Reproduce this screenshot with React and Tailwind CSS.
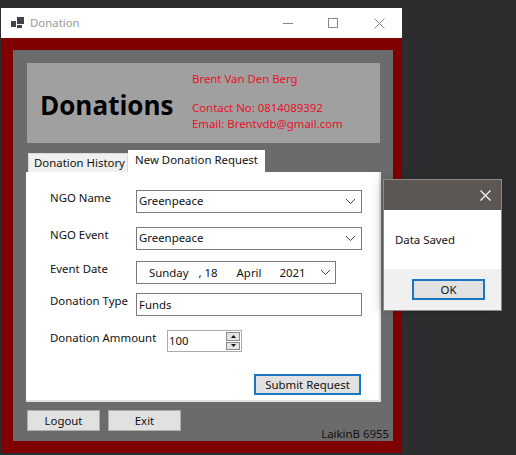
import React from 'react';

const font = { fontFamily: '"Noto Sans", sans-serif' };

const Chevron = ({ className }) => (
  <svg width="11" height="7" viewBox="0 0 11 7" className={className} fill="none" stroke="#444" strokeWidth="1">
    <path d="M1 1l4.5 4.5L10 1" />
  </svg>
);

const Select = ({ value }) => (
  <div className="w-[226px] h-[23px] border border-[#7a7a7a] bg-white flex items-center justify-between pl-[2px] pr-[5px]">
    <span className="pb-[2px]">{value}</span>
    <Chevron />
  </div>
);

const Row = ({ label, mt, children }) => (
  <div className={`flex ${mt}`}>
    <div className="w-[86px] shrink-0 whitespace-nowrap">{label}</div>
    {children}
  </div>
);

const App = () => {
  return (
    <div style={font} className="relative w-[516px] h-[455px] overflow-hidden bg-[#2d2d30] text-[11.4px] leading-[16px] text-[#111]">
      <div className="ml-[1px] mt-[8px] w-[401px] h-[445px] flex flex-col bg-[#800000]">
        {/* Title bar */}
        <div className="h-[30px] shrink-0 bg-white flex items-center pl-[10px]">
          <svg width="14" height="12" viewBox="0 0 14 12" fill="#444">
            <rect x="0" y="4" width="5" height="6" />
            <rect x="6" y="0" width="7" height="7" />
            <rect x="6" y="8" width="5" height="3" />
          </svg>
          <span className="ml-[5px] text-[#999]">Donation</span>
          <div className="ml-auto flex items-center">
            <svg width="10" height="1" className="mr-[35px]"><rect width="10" height="1" fill="#888" /></svg>
            <svg width="10" height="10" className="mr-[36px]"><rect x="0.5" y="0.5" width="9" height="9" fill="none" stroke="#888" /></svg>
            <svg width="11" height="11" className="mr-[17px]" stroke="#888" fill="none"><path d="M0.5 0.5l10 10M10.5 0.5l-10 10" /></svg>
          </div>
        </div>

        {/* Gray panel */}
        <div className="ml-[12px] mr-[9px] mt-[12px] h-[391px] bg-[#6b6b6b] flex flex-col pt-[13px]">
          <div className="ml-[14px] w-[353px] h-[80px] shrink-0 bg-[#a0a0a0] flex">
            <div className="ml-[13px] mt-[24px] w-[152px] text-[26px] leading-[36px] font-bold text-black whitespace-nowrap" style={{ fontFamily: '"Open Sans", sans-serif' }}>Donations</div>
            <div className="pt-[8px] text-[#e8102a] whitespace-nowrap">
              <div>Brent Van Den Berg</div>
              <div className="mt-[13px]">Contact No: 0814089392</div>
              <div>Email: Brentvdb@gmail.com</div>
            </div>
          </div>

          {/* Tabs */}
          <div className="ml-[15px] mt-[7px] flex items-end h-[22px] shrink-0">
            <div className="w-[100px] h-[19px] bg-[#f0f0f0] border border-b-0 border-[#d9d9d9] pl-[5px] whitespace-nowrap leading-[18px]">Donation History</div>
            <div className="w-[137px] h-[22px] bg-white text-center whitespace-nowrap leading-[20px]">New Donation Request</div>
          </div>

          {/* Tab page */}
          <div className="ml-[13px] w-[355px] h-[230px] shrink-0 bg-white border-r-2 border-b-2 border-[#e2e2e2] pl-[24px] pt-[18px] flex flex-col">
            <Row label="NGO Name" mt="mt-0">
              <Select value="Greenpeace" />
            </Row>
            <Row label="NGO Event" mt="mt-[14px]">
              <Select value="Greenpeace" />
            </Row>
            <Row label="Event Date" mt="mt-[11px]">
              <div className="w-[200px] h-[23px] border border-[#7a7a7a] bg-white flex items-center pl-[12px] pr-[4px]">
                <span>Sunday</span>
                <span className="ml-[10px]">, 18</span>
                <span className="ml-[19px]">April</span>
                <span className="ml-[18px]">2021</span>
                <Chevron className="ml-auto" />
              </div>
            </Row>
            <Row label="Donation Type" mt="mt-[9px]">
              <div className="w-[226px] h-[23px] border border-[#7a7a7a] bg-white flex items-center pl-[2px]">Funds</div>
            </Row>
            <div className="flex mt-[14px]">
              <div className="w-[117px] shrink-0 whitespace-nowrap">Donation Ammount</div>
              <div className="w-[75px] h-[22px] border border-[#ababab] bg-white flex items-center pl-[1px] pr-[1px]">
                <span>100</span>
                <div className="ml-auto w-[14px] h-[18px] flex flex-col gap-[1px]">
                  <div className="h-[9px] bg-[#e4e4e4] border border-[#8a8a8a] flex items-center justify-center">
                    <svg width="5" height="3"><path d="M2.5 0L5 3H0z" fill="#111" /></svg>
                  </div>
                  <div className="h-[9px] bg-[#e4e4e4] border border-[#8a8a8a] flex items-center justify-center">
                    <svg width="5" height="3"><path d="M0 0h5L2.5 3z" fill="#111" /></svg>
                  </div>
                </div>
              </div>
            </div>
            <div className="ml-[204px] mt-[22px] w-[107px] h-[21px] border-2 border-[#1a76c4] bg-[#e1e1e1] flex items-center justify-center whitespace-nowrap">Submit Request</div>
          </div>

          {/* Bottom buttons */}
          <div className="ml-[14px] mt-[8px] flex gap-[8px]">
            <div className="w-[73px] h-[21px] bg-[#e1e1e1] border border-[#adadad] flex items-center justify-center">Logout</div>
            <div className="w-[73px] h-[21px] bg-[#e1e1e1] border border-[#adadad] flex items-center justify-center">Exit</div>
          </div>
          <div className="ml-auto mr-[4px] mt-[-5px] text-[#111] whitespace-nowrap">LaikinB 6955</div>
        </div>
      </div>

      {/* Message box */}
      <div className="absolute left-[383px] top-[179px] w-[119px] h-[132px] flex flex-col border border-[#8a8a8a] bg-white shadow-[-4px_0_10px_rgba(0,0,0,0.15)]">
        <div className="h-[30px] shrink-0 bg-[#5c5752] flex items-center justify-end pr-[10px]">
          <svg width="11" height="11" stroke="#fff" strokeWidth="1.2" fill="none"><path d="M0.5 0.5l10 10M10.5 0.5l-10 10" /></svg>
        </div>
        <div className="h-[59px] shrink-0 pl-[11px] pt-[22px]">Data Saved</div>
        <div className="flex-1 bg-[#f0f0f0] pl-[28px] pt-[10px]">
          <div className="w-[73px] h-[21px] border-2 border-[#1a76c4] bg-[#e1e1e1] flex items-center justify-center">OK</div>
        </div>
      </div>
    </div>
  );
};

export default App;
